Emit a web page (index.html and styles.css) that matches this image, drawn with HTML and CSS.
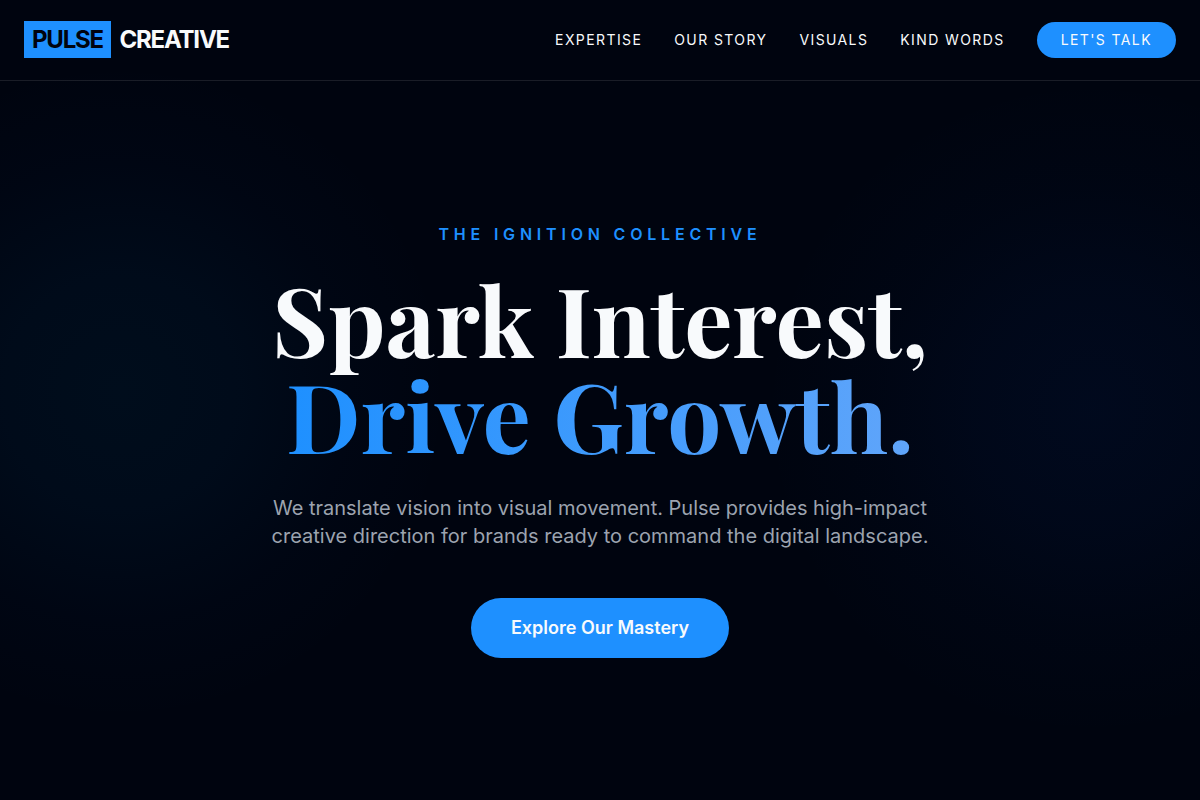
FILE: index.html
```html
<!DOCTYPE html>
<html lang="en">
<head>
  <meta charset="UTF-8" />
  <meta name="viewport" content="width=device-width, initial-scale=1.0"/>
  <title>Pulse Creative</title>
  <link rel="stylesheet" href="styles.css">
</head>
<body>
  <header class="navbar">
    <a class="logo" href="#"><span class="logo-mark">PULSE</span> CREATIVE</a>
    <nav class="nav-links">
      <a href="#expertise">Expertise</a>
      <a href="#story">Our Story</a>
      <a href="#visuals">Visuals</a>
      <a href="#words">Kind Words</a>
      <a class="nav-cta" href="#contact">Let's Talk</a>
    </nav>
  </header>

  <main class="hero">
    <p class="eyebrow">The Ignition Collective</p>
    <h1>Spark Interest,<br/><span class="gradient-text">Drive Growth.</span></h1>
    <p class="lead">We translate vision into visual movement. Pulse provides high-impact creative direction for brands ready to command the digital landscape.</p>
    <button class="hero-btn" type="button">Explore Our Mastery</button>
  </main>
</body>
</html>
```

FILE: styles.css
```css
* { box-sizing: border-box; margin: 0; padding: 0; }

body {
  min-height: 100vh;
  display: flex;
  flex-direction: column;
  font-family: Inter, "Liberation Sans", sans-serif;
  color: #f8fafc;
  background:
    radial-gradient(circle at 10% 49%, rgba(0, 120, 180, 0.08), rgba(0, 120, 200, 0.06) 120px, rgba(0, 100, 220, 0.02) 230px, transparent 330px),
    radial-gradient(circle at 91% 51%, rgba(10, 80, 220, 0.07), rgba(10, 80, 220, 0.05) 120px, rgba(10, 80, 220, 0.02) 220px, transparent 330px),
    #00040f;
}

a { color: inherit; text-decoration: none; }

/* header */
.navbar {
  display: flex;
  justify-content: space-between;
  align-items: center;
  min-height: 81px;
  padding: 0 24px;
  border-bottom: 1px solid rgba(255, 255, 255, 0.1);
}
.logo {
  font-size: 24px;
  font-weight: 700;
  line-height: 32px;
  letter-spacing: -0.05em;
}
.logo-mark { margin-right: 4px; padding: 4px 8px; background: #1e90ff; color: #00040f; }
.nav-links {
  display: flex;
  align-items: center;
  gap: 32px;
  font-size: 14px;
  line-height: 20px;
  letter-spacing: 0.1em;
  text-transform: uppercase;
}
.nav-cta { padding: 8px 24px; border-radius: 99px; background: #1e90ff; }

/* hero */
.hero {
  flex: 1;
  display: flex;
  flex-direction: column;
  align-items: center;
  justify-content: center;
  padding: 0 24px 2px;
  text-align: center;
}
.eyebrow {
  margin-bottom: 24px;
  color: #1e90ff;
  font-size: 16px;
  font-weight: 600;
  line-height: 24px;
  letter-spacing: 0.3em;
  text-transform: uppercase;
}
h1 {
  margin-bottom: 32px;
  font-family: "Playfair Display", "Liberation Serif", serif;
  font-size: 96px;
  font-weight: 700;
  line-height: 96px;
}
.gradient-text {
  background: linear-gradient(90deg, #1e90ff, #60a5fa);
  -webkit-background-clip: text;
  background-clip: text;
  color: transparent;
}
.lead {
  max-width: 672px;
  margin-bottom: 48px;
  color: #9ca3af;
  font-size: 20px;
  line-height: 28px;
}
.hero-btn {
  padding: 16px 40px;
  border: 0;
  border-radius: 99px;
  background: #1e90ff;
  color: #f8fafc;
  font: 600 18px/28px Inter, "Liberation Sans", sans-serif;
}
```
